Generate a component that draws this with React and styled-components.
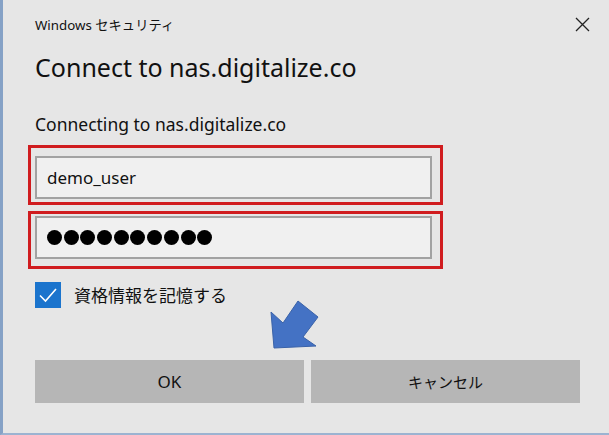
import React from 'react';
import styled, { createGlobalStyle } from 'styled-components';

const GlobalStyle = createGlobalStyle`
  html, body {
    margin: 0;
    padding: 0;
    background: #e6e6e6;
  }
  body {
    font-family: "Noto Sans", "Noto Sans CJK JP", sans-serif;
    color: #000;
  }
`;

const Frame = styled.div`
  position: relative;
  box-sizing: border-box;
  width: 609px;
  height: 435px;
  padding: 0 19px 0 32px;
  background: #e6e6e6;
  border-left: 3px solid #86a2c6;
  border-bottom: 2px solid #9cb3d1;
  overflow: hidden;
`;

const TitleBar = styled.div`
  display: flex;
  align-items: center;
  justify-content: space-between;
  height: 48px;
`;

const TitleText = styled.div`
  font-size: 13.3px;
  color: #111;
`;

const CloseIcon = styled.svg`
  width: 15px;
  height: 15px;
`;

const Heading = styled.h1`
  margin: 3px 0 0;
  font-size: 25px;
  font-weight: 400;
  line-height: 32px;
  color: #111;
`;

const Subtitle = styled.div`
  margin-top: 30px;
  font-size: 17.5px;
  line-height: 22px;
  color: #111;
`;

const RedBox = styled.div`
  box-sizing: border-box;
  width: 415px;
  height: ${p => p.$height}px;
  margin: ${p => p.$gap}px 0 0 -7px;
  padding: ${p => p.$top}px 0 0 4px;
  border: 3px solid #d01c1f;
`;

const Field = styled.div`
  box-sizing: border-box;
  display: flex;
  align-items: center;
  width: 397px;
  height: 43px;
  padding-left: 10px;
  background: #f0f0f0;
  border: 2px solid #a2a2a2;
  font-size: 17px;
  color: #111;
`;

const Dots = styled.div`
  display: flex;
  gap: 1.7px;
`;

const Dot = styled.span`
  width: 15px;
  height: 15px;
  border-radius: 50%;
  background: #000;
`;

const CheckRow = styled.label`
  display: flex;
  align-items: center;
  gap: 13px;
  margin-top: 12px;
  height: 27px;
`;

const CheckBox = styled.span`
  display: flex;
  align-items: center;
  justify-content: center;
  width: 26px;
  height: 26px;
  background: #1b74cd;
`;

const CheckLabel = styled.span`
  font-size: 17px;
  color: #111;
`;

const Buttons = styled.div`
  display: flex;
  gap: 7px;
  margin-top: 52px;
`;

const Button = styled.button`
  width: 269px;
  height: 43px;
  border: none;
  background: #b6b6b6;
  font-family: "Noto Sans", "Noto Sans CJK JP", sans-serif;
  font-size: ${p => p.$size}px;
  color: #111;
  padding: 0;
`;

const Arrow = styled.svg`
  position: absolute;
  left: 263px;
  top: 296px;
  width: 56px;
  height: 56px;
`;

const App = () => {
  const dots = Array.from({ length: 10 });
  return (
    <>
      <GlobalStyle />
      <Frame>
        <TitleBar>
          <TitleText>Windows セキュリティ</TitleText>
          <CloseIcon viewBox="0 0 15 15">
            <path d="M1 1 L14 14 M14 1 L1 14" stroke="#222" strokeWidth="1.3" fill="none" />
          </CloseIcon>
        </TitleBar>
        <Heading>Connect to nas.digitalize.co</Heading>
        <Subtitle>Connecting to nas.digitalize.co</Subtitle>
        <RedBox $height={60} $gap={10} $top={8}>
          <Field>demo_user</Field>
        </RedBox>
        <RedBox $height={58} $gap={6} $top={2}>
          <Field>
            <Dots>
              {dots.map((_, i) => (
                <Dot key={i} />
              ))}
            </Dots>
          </Field>
        </RedBox>
        <CheckRow>
          <CheckBox>
            <svg width="20" height="20" viewBox="0 0 20 20">
              <path d="M2 10.5 L7.5 16 L18 4" stroke="#fff" strokeWidth="1.6" fill="none" />
            </svg>
          </CheckBox>
          <CheckLabel>資格情報を記憶する</CheckLabel>
        </CheckRow>
        <Buttons>
          <Button $size={17}>OK</Button>
          <Button $size={15}>キャンセル</Button>
        </Buttons>
        <Arrow viewBox="0 0 56 56">
          <polygon
            points="5,16 8,52 50,50 37,41 52,21 32,5 17,27"
            fill="#4472c4"
            stroke="#3a62a8"
            strokeWidth="1"
          />
        </Arrow>
      </Frame>
    </>
  );
};

export default App;
